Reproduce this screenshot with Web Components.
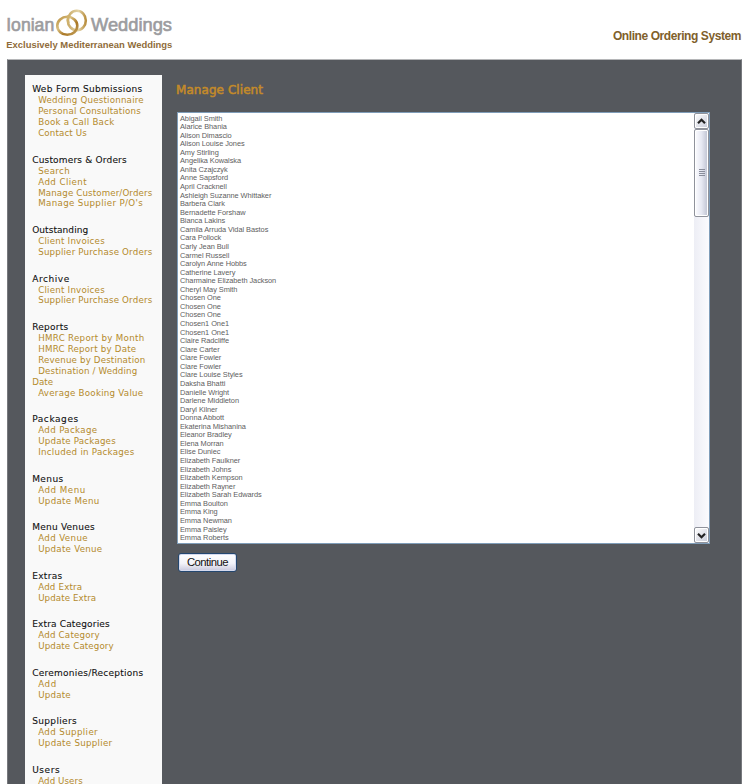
<!DOCTYPE html>
<html lang="en">
<head>
<meta charset="utf-8">
<title>Ionian Weddings - Online Ordering System</title>
<style>
body{margin:0;background:#fff;font-family:"Liberation Sans",Arial,sans-serif;height:784px;overflow:hidden}
</style>
</head>
<body>
<order-app></order-app>
<script>
const define=(name,html,setup)=>customElements.define(name,class extends HTMLElement{
  constructor(){super();this.attachShadow({mode:'open'});}
  connectedCallback(){this.shadowRoot.innerHTML=html;if(setup)setup.call(this,this.shadowRoot);}
});

/* A run of text tracked so that it fills the width given in its attribute. */
define('tracked-text','<style>:host{display:inline-block;white-space:nowrap}span{display:inline-block}</style><span><slot></slot></span>',function(root){
  const target=parseFloat(this.getAttribute('width')),span=root.querySelector('span');
  const n=this.textContent.length;
  const w=span.getBoundingClientRect().width;
  if(target&&n>1&&w)span.style.letterSpacing=((target-w)/(n-1))+'px';
});

define('brand-logo',`<style>
:host{display:block;width:180px;height:59px}
svg{display:block}
</style>
<svg width="180" height="59" viewBox="0 0 180 59" font-family="Liberation Sans, Arial, sans-serif">
<defs><linearGradient id="g" x1="0" y1="0" x2="1" y2="1"><stop offset="0" stop-color="#b88d3c"/><stop offset=".35" stop-color="#d9bf80"/><stop offset=".65" stop-color="#a97724"/><stop offset="1" stop-color="#c5a35f"/></linearGradient>
<linearGradient id="h" x1="0" y1="0" x2="1" y2="0"><stop offset="0" stop-color="#c9ab68"/><stop offset=".6" stop-color="#e3d3a6"/><stop offset="1" stop-color="#b98f40"/></linearGradient></defs>
<g fill="#9c9c9f" stroke="#9c9c9f" stroke-width=".65" font-size="18.6"><text x="6.2" y="30.5" textLength="48" lengthAdjust="spacingAndGlyphs">Ionian</text><text x="91" y="30.5" textLength="81" lengthAdjust="spacingAndGlyphs">Weddings</text></g>
<g fill="none"><ellipse cx="76.8" cy="20.5" rx="9" ry="9.8" stroke="url(#h)" stroke-width="2.6"/><ellipse cx="67.3" cy="25.8" rx="10" ry="9" stroke="url(#g)" stroke-width="2.6"/><path d="M68.6 15.6A9 9.8 0 0 0 68.4 23.5" stroke="#d0b26c" stroke-width="2.4"/></g>
<text x="6.3" y="47.5" font-size="9.6" font-weight="bold" fill="#8f6c3a" textLength="166" lengthAdjust="spacingAndGlyphs">Exclusively Mediterranean Weddings</text>
</svg>`);

define('page-header',`<style>
:host{display:flex;justify-content:space-between;height:59px;padding-right:9px}
.t{padding-top:29px;font-size:12px;line-height:14px;color:#80602b;font-weight:bold}
</style><brand-logo></brand-logo><div class="t"><tracked-text width="128.5">Online Ordering System</tracked-text></div>`);

define('nav-group',`<style>
:host{display:block;font-size:8.7px;line-height:10.95px;margin-bottom:15.7px;color:#b48a2c}
h3{margin:0;font:inherit;font-size:9px;color:#111;-webkit-text-stroke:.1px #111}
a{display:block;padding-left:6px;height:10.95px;white-space:nowrap}
a.out{padding-left:0}
</style><h3></h3><nav></nav>`,function(root){
  const mk=([t,w])=>{const e=document.createElement('tracked-text');e.setAttribute('width',w);e.textContent=t;return e;};
  root.querySelector('h3').append(mk(this.data.head));
  for(const item of this.data.items){const a=document.createElement('a');if(item[2])a.className='out';root.querySelector('nav').append(a);a.append(mk(item));}
});

const groups=[
[['Web Form Submissions',110],['Wedding Questionnaire',105.5],['Personal Consultations',102.5],['Book a Call Back',76],['Contact Us',48.5]],
[['Customers & Orders',94.5],['Search',31.5],['Add Client',48.5],['Manage Customer/Orders',114],['Manage Supplier P/O\'s',104.5]],
[['Outstanding',56],['Client Invoices',66.5],['Supplier Purchase Orders',114]],
[['Archive',37],['Client Invoices',66.5],['Supplier Purchase Orders',114]],
[['Reports',36],['HMRC Report by Month',106],['HMRC Report by Date',98],['Revenue by Destination',107],['Destination / Wedding',99],['Date',21,1],['Average Booking Value',105]],
[['Packages',46],['Add Package',59],['Update Packages',77.5],['Included in Packages',96]],
[['Menus',31],['Add Menu',47],['Update Menu',61]],
[['Menu Venues',62.5],['Add Venue',49.5],['Update Venue',64]],
[['Extras',30],['Add Extra',44],['Update Extra',58]],
[['Extra Categories',77.5],['Add Category',61.5],['Update Category',75.5]],
[['Ceremonies/Receptions',111],['Add',18],['Update',32.5]],
[['Suppliers',44.5],['Add Supplier',59.5],['Update Supplier',74]],
[['Users',27.5],['Add Users',44.5]]];

define('side-nav',`<style>
:host{display:block;box-sizing:border-box;width:137px;background:#f9f9f9;padding:9.3px 0 0 7.2px;font-family:"DejaVu Sans",Verdana,sans-serif;overflow:hidden}
</style>`,function(root){
  for(const [head,...items] of groups){const g=document.createElement('nav-group');g.data={head,items};root.append(g);}
});

define('scroll-bar',`<style>
:host{display:flex;flex-direction:column;width:15px;background:linear-gradient(90deg,#edeef5,#fbfbfe)}
.b{box-sizing:border-box;border:1px solid #8f929b;border-radius:2px;background:linear-gradient(135deg,#fff,#c7cad8);box-shadow:inset 0 0 0 1px #fff;display:flex;align-items:center;justify-content:center;height:16px}
.thumb{height:88px;background:linear-gradient(90deg,#fcfcff,#e6e8f2 50%,#bdc1d0)}
.gap{flex:1}
svg{display:block}
</style>
<div class="b"><svg width="9" height="7" viewBox="0 0 9 7"><path d="M1 5.2 4.5 1.8 8 5.2" fill="none" stroke="#222" stroke-width="2.2"/></svg></div>
<div class="b thumb"><svg width="6" height="8" viewBox="0 0 6 8"><path d="M0 .5h6M0 2.5h6M0 4.5h6M0 6.5h6" stroke="#898d9b" stroke-width="1"/></svg></div>
<div class="gap"></div>
<div class="b"><svg width="9" height="7" viewBox="0 0 9 7"><path d="M1 1.8 4.5 5.2 8 1.8" fill="none" stroke="#222" stroke-width="2.2"/></svg></div>`);

const names=`Abigail Smith|Alarice Bhania|Alison Dimascio|Alison Louise Jones|Amy Stirling|Angelika Kowalska|Anita Czajczyk|Anne Sapsford|April Cracknell|Ashleigh Suzanne Whittaker|Barbera Clark|Bernadette Forshaw|Bianca Lakins|Camila Arruda Vidal Bastos|Cara Pollock|Carly Jean Bull|Carmel Russell|Carolyn Anne Hobbs|Catherine Lavery|Charmaine Elizabeth Jackson|Cheryl May Smith|Chosen One|Chosen One|Chosen One|Chosen1 One1|Chosen1 One1|Claire Radcliffe|Clare Carter|Clare Fowler|Clare Fowler|Clare Louise Styles|Daksha Bhatti|Danielle Wright|Darlene Middleton|Daryl Kilner|Donna Abbott|Ekaterina Mishanina|Eleanor Bradley|Elena Morran|Elise Duniec|Elizabeth Faulkner|Elizabeth Johns|Elizabeth Kempson|Elizabeth Rayner|Elizabeth Sarah Edwards|Emma Boulton|Emma King|Emma Newman|Emma Paisley|Emma Roberts`.split('|');

define('client-list',`<style>
:host{display:flex;box-sizing:border-box;width:533px;height:432px;border:1px solid #7f9db9;background:#fff}
.l{flex:1;padding:1.5px 0 0 2px;font-size:7.4px;letter-spacing:-.06px;line-height:8.565px;color:#606060}
.l div{height:8.565px;white-space:nowrap}
</style><div class="l"></div><scroll-bar></scroll-bar>`,function(root){
  for(const n of names){const d=document.createElement('div');d.textContent=n;root.querySelector('.l').append(d);}
});

define('push-button',`<style>
:host{display:block}
button{box-sizing:border-box;width:59px;height:19px;padding:0;border:1px solid #24476f;border-radius:3px;background:linear-gradient(#fff,#f3f3f9 55%,#c8c8de);box-shadow:inset 0 0 0 1px #d5daee;font:11.3px/15px "Liberation Sans",Arial,sans-serif;letter-spacing:-.5px;color:#111;display:block}
</style><button><slot></slot></button>`);

define('client-manager',`<style>
:host{display:block;padding-left:15px}
h1{margin:0 0 0 -1px;height:37px;font:12px/31px "DejaVu Sans",Verdana,sans-serif;color:#c38a2a;-webkit-text-stroke:.55px #c38a2a}
push-button{margin:9px 0 0 1px}
</style><h1><tracked-text width="87">Manage Client</tracked-text></h1><client-list></client-list><push-button>Continue</push-button>`);

define('order-app',`<style>
:host{display:block;width:750px;height:784px;overflow:hidden}
main{box-sizing:border-box;margin:0 8px 0 7px;height:725px;background:#55585d;border-top:1px solid #b5b6b8;border-left:1px solid #77797d;border-right:1px solid #77797d;padding:15px 0 0 17px;display:flex;overflow:hidden}
side-nav{height:709px}
</style><page-header></page-header><main><side-nav></side-nav><client-manager></client-manager></main>`);
</script>
</body>
</html>
